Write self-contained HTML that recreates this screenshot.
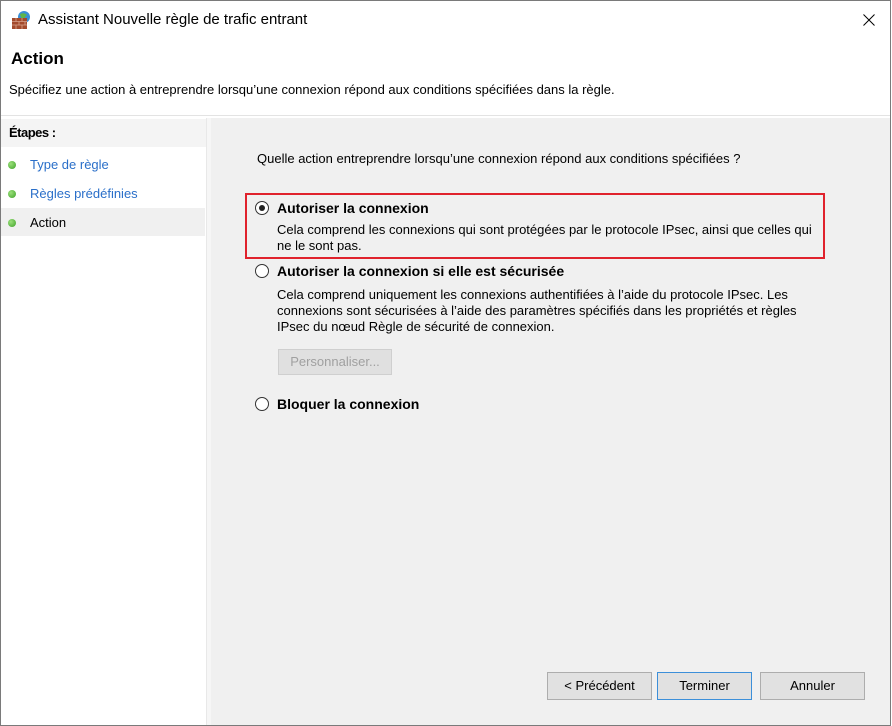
<!DOCTYPE html>
<html><head><meta charset="utf-8"><style>
*{margin:0;padding:0;box-sizing:border-box}
body{width:892px;height:726px;overflow:hidden;background:#fff;font-family:"Liberation Sans",sans-serif;font-size:13px;color:#000;position:relative}
.win{position:absolute;left:0;top:0;width:891px;height:726px;border:1px solid #7a7a7a;background:#fff}
.abs{position:absolute;white-space:nowrap}
.radio{position:absolute;width:14px;height:14px;border:1px solid #333;border-radius:50%;background:#fff}
.radio.on::after{content:"";position:absolute;left:3px;top:3px;width:6px;height:6px;border-radius:50%;background:#222}
.btn{position:absolute;height:28px;border:1px solid #adadad;background:#e1e1e1;text-align:center;line-height:26px;font-size:13px}
.dot{position:absolute;left:7px;width:8px;height:8px;border-radius:50%;background:radial-gradient(circle at 35% 35%,#9be07a,#3fa22a)}
.b{font-weight:bold;font-size:14px}
</style></head><body>
<div class="win">
<svg class="abs" style="left:10px;top:9px" width="22" height="20" viewBox="0 0 22 20">
<circle cx="13" cy="7" r="6" fill="#3a8fd6"/><path d="M9 4 q4 -2 7 1 q-3 2 -2 5 q-4 0 -5 -6z" fill="#5fb54a"/>
<rect x="1" y="8" width="15" height="11" fill="#a34a2c"/>
<path d="M1 11.5h15M1 15h15M5 8v3.5M11 8v3.5M8 11.5v3.5M14 11.5v3.5M5 15v4M11 15v4" stroke="#d9a38c" stroke-width="0.8"/>
</svg>
<div class="abs" style="left:37px;top:10px;font-size:15px">Assistant Nouvelle règle de trafic entrant</div>
<svg class="abs" style="left:862px;top:13px" width="12" height="12"><path d="M0.5 0.5L11.5 11.5M11.5 0.5L0.5 11.5" stroke="#000" stroke-width="1"/></svg>
<div class="abs" style="left:10px;top:48px;font-size:17px;font-weight:bold">Action</div>
<div class="abs" style="left:8px;top:81px">Spécifiez une action à entreprendre lorsqu’une connexion répond aux conditions spécifiées dans la règle.</div>
<div class="abs" style="left:0;top:114px;width:889px;height:1px;background:#e3e3e3"></div>
<div class="abs" style="left:0;top:117px;width:206px;height:607px;background:#fff;border-right:1px solid #e8e8e8"></div>
<div class="abs" style="left:206px;top:117px;width:4px;height:607px;background:#f6f6f6"></div>
<div class="abs" style="left:0;top:118px;width:205px;height:28px;background:#f4f4f4"></div>
<div class="abs" style="left:8px;top:124px;font-weight:bold;font-size:13px;letter-spacing:-0.5px">Étapes :</div>
<div class="dot" style="top:160px"></div><div class="abs" style="left:29px;top:156px;color:#2a6fc9">Type de règle</div>
<div class="dot" style="top:189px"></div><div class="abs" style="left:29px;top:185px;color:#2a6fc9">Règles prédéfinies</div>
<div class="abs" style="left:0;top:207px;width:204px;height:28px;background:#f0f0f0"></div>
<div class="dot" style="top:218px"></div><div class="abs" style="left:29px;top:214px">Action</div>
<div class="abs" style="left:210px;top:117px;width:679px;height:607px;background:#f0f0f0"></div>
<div class="abs" style="left:256px;top:150px">Quelle action entreprendre lorsqu’une connexion répond aux conditions spécifiées ?</div>
<div class="abs" style="left:244px;top:192px;width:580px;height:66px;border:2px solid #e0222c"></div>
<div class="radio on" style="left:254px;top:200px"></div>
<div class="abs b" style="left:276px;top:199px">Autoriser la connexion</div>
<div class="abs" style="left:276px;top:221px">Cela comprend les connexions qui sont protégées par le protocole IPsec, ainsi que celles qui</div>
<div class="abs" style="left:276px;top:237px">ne le sont pas.</div>
<div class="radio" style="left:254px;top:263px"></div>
<div class="abs b" style="left:276px;top:262px">Autoriser la connexion si elle est sécurisée</div>
<div class="abs" style="left:276px;top:286px">Cela comprend uniquement les connexions authentifiées à l’aide du protocole IPsec. Les</div>
<div class="abs" style="left:276px;top:302px">connexions sont sécurisées à l’aide des paramètres spécifiés dans les propriétés et règles</div>
<div class="abs" style="left:276px;top:318px">IPsec du nœud Règle de sécurité de connexion.</div>
<div class="btn" style="left:277px;top:348px;width:114px;height:26px;line-height:24px;color:#a0a0a0;background:#e0e0e0;border-color:#cfcfcf">Personnaliser...</div>
<div class="radio" style="left:254px;top:396px"></div>
<div class="abs b" style="left:276px;top:395px">Bloquer la connexion</div>
<div class="btn" style="left:546px;top:671px;width:105px">&lt; Précédent</div>
<div class="btn" style="left:656px;top:671px;width:95px;border-color:#3c8fd9">Terminer</div>
<div class="btn" style="left:759px;top:671px;width:105px">Annuler</div>
</div>
</body></html>
